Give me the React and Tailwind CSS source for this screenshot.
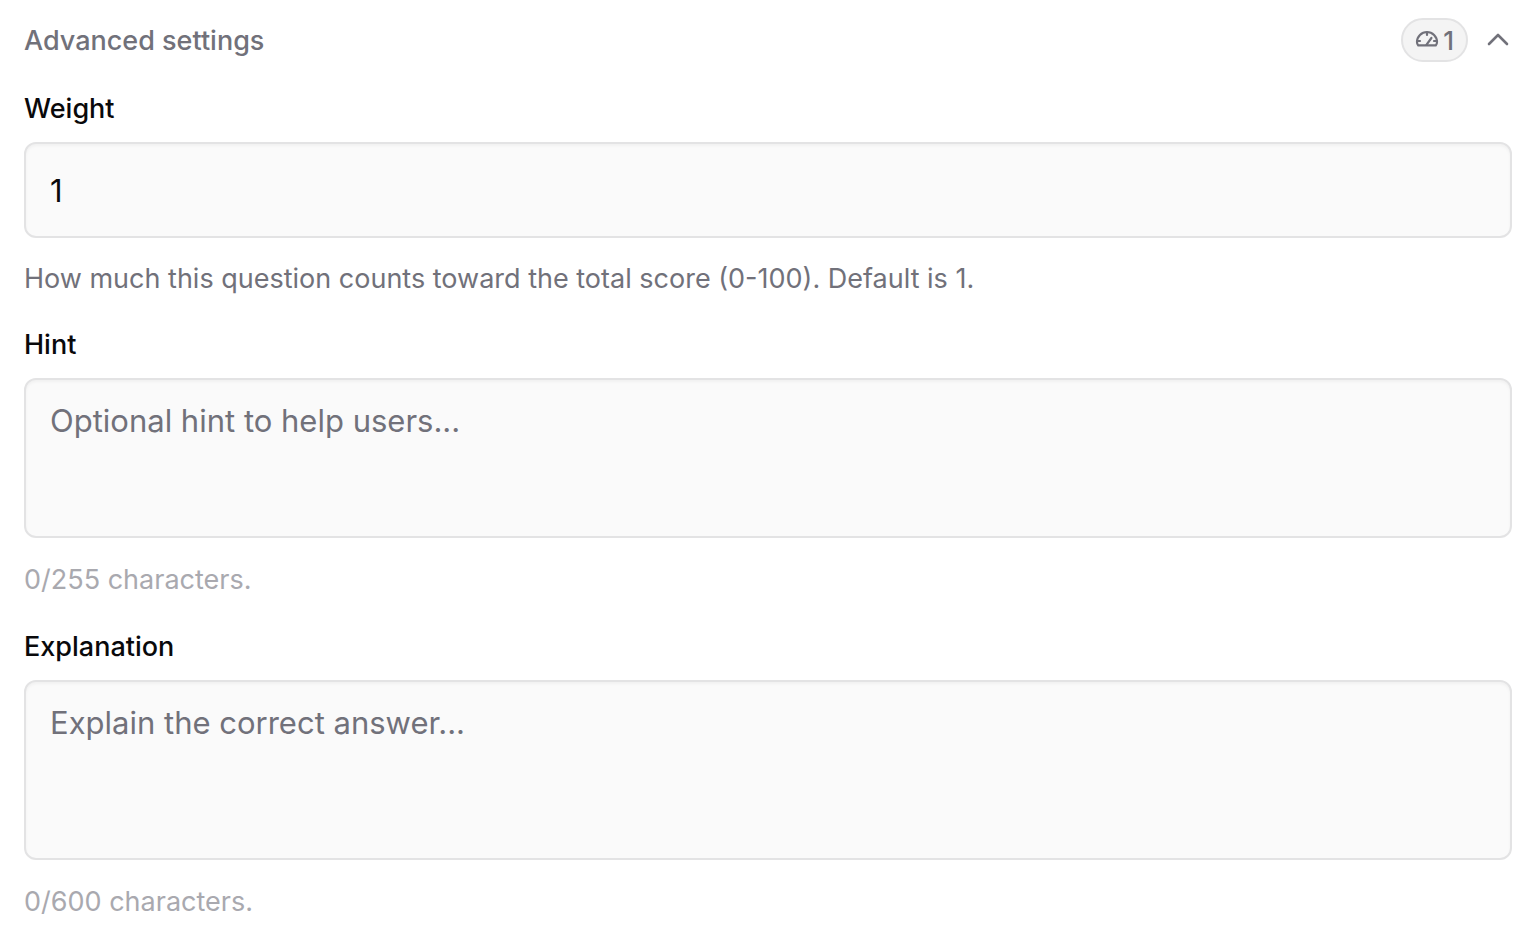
import React, { useState } from 'react';

const GaugeIcon = () => (
  <svg
    viewBox="0 0 24 24"
    className="size-6"
    fill="none"
    stroke="currentColor"
    strokeWidth="2.2"
    strokeLinecap="round"
    strokeLinejoin="round"
    aria-hidden="true"
  >
    <path d="M3.2 17.3C2.4 16.6 2 15.4 2 14a10 10 0 0 1 20 0c0 1.4-.4 2.6-1.2 3.3Z" />
    <path d="M12 4.5V7M2.5 13H5M19 13h2.5M11.4 16.8l5-6.8" />
  </svg>
);

const ChevronUpIcon = () => (
  <svg
    viewBox="0 0 28 28"
    className="size-7"
    fill="none"
    stroke="currentColor"
    strokeWidth="2.6"
    strokeLinecap="round"
    strokeLinejoin="round"
    aria-hidden="true"
  >
    <path d="M5 18 14 9l9 9" />
  </svg>
);

const fieldClass =
  'block w-full resize-none rounded-xl border-2 border-[#e3e3e4] bg-[#fafafa] px-6 text-[31px] leading-[42px] text-zinc-950 placeholder:text-[#71717a] placeholder:opacity-100 shadow-[inset_0_2px_3px_rgba(0,0,0,0.04)] focus:outline-none';

const Field = ({ id, label, children }) => (
  <div>
    <label htmlFor={id} className="mb-[18px] block text-[27px] leading-[30px] font-medium text-zinc-950">
      {label}
    </label>
    {children}
  </div>
);

const TextAreaField = ({ id, label, placeholder, max, heightClass }) => {
  const [value, setValue] = useState('');

  return (
    <Field id={id} label={label}>
      <textarea
        id={id}
        value={value}
        maxLength={max}
        placeholder={placeholder}
        onChange={(e) => setValue(e.target.value)}
        className={`${fieldClass} ${heightClass} py-5`}
      />
      <p className="mt-5 text-[27px] leading-[44px] text-[#a9a9af]">
        {value.length}/{max} characters.
      </p>
    </Field>
  );
};

const App = () => {
  const [open, setOpen] = useState(true);
  const [weight, setWeight] = useState('1');

  return (
    <div className="min-h-screen bg-white pt-[18px] pr-5 pl-6 font-['Inter','Liberation_Sans',sans-serif]">
      <button
        type="button"
        aria-expanded={open}
        onClick={() => setOpen(!open)}
        className="flex w-full items-center justify-between text-[27px] leading-[30px] font-medium text-[#71717a]"
      >
        <span className="pt-0.5">Advanced settings</span>
        <span className="flex items-center gap-4">
          <span className="flex h-11 items-center gap-1 rounded-full border-2 border-[#e3e3e4] bg-[#f4f4f4] px-3 text-[26px]">
            <GaugeIcon />
            <span className="pt-0.5">{weight}</span>
          </span>
          <ChevronUpIcon />
        </span>
      </button>

      {open && (
        <div className="mt-8 flex flex-col gap-[30px]">
          <Field id="weight" label="Weight">
            <input
              id="weight"
              type="text"
              inputMode="numeric"
              value={weight}
              onChange={(e) => setWeight(e.target.value)}
              className={`${fieldClass} h-24`}
            />
            <p className="mt-5 text-[27px] leading-[42px] text-[#71717a]">
              How much this question counts toward the total score (0-100). Default is 1.
            </p>
          </Field>
          <TextAreaField
            id="hint"
            label="Hint"
            placeholder="Optional hint to help users..."
            max={255}
            heightClass="h-40"
          />
          <TextAreaField
            id="explanation"
            label="Explanation"
            placeholder="Explain the correct answer..."
            max={600}
            heightClass="h-45"
          />
        </div>
      )}
    </div>
  );
};

export default App;
